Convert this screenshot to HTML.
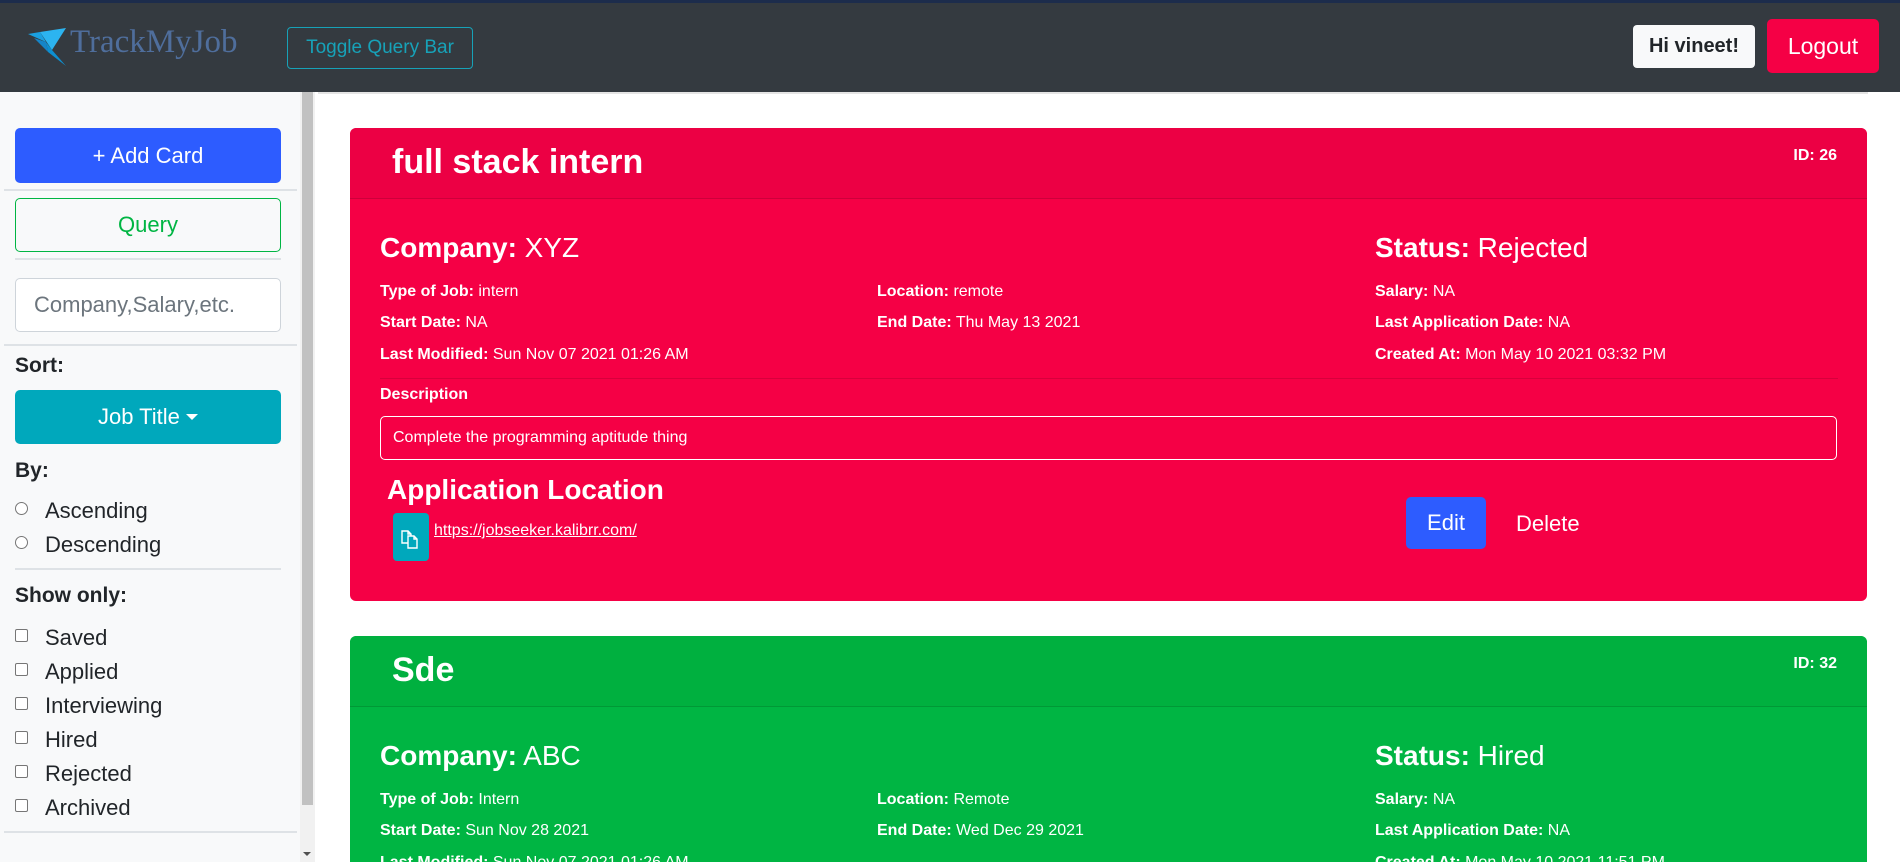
<!DOCTYPE html>
<html style="overflow:hidden;width:1900px;height:862px"><head><meta charset="utf-8"><style>
*{box-sizing:border-box;margin:0;padding:0}
body{width:1900px;height:862px;overflow:hidden;background:#fff;font-family:"Liberation Sans",sans-serif;position:relative}
.a{position:absolute}
.nav{left:0;top:0;width:1900px;height:92px;background:#343a40;border-top:3px solid #1c2c4c}
.logo{left:70px;top:24px;font-family:"Liberation Serif",serif;font-size:33px;color:#4f6e9c}
.tog{left:287px;top:27px;width:186px;height:42px;border:1px solid #17a2b8;border-radius:4px;color:#17a2b8;font-size:19px;text-align:center;line-height:40px}
.hi{left:1633px;top:25px;width:122px;height:43px;background:#f8f9fa;border-radius:4px;font-weight:bold;font-size:20px;text-align:center;line-height:43px;color:#212529}
.lo{left:1767px;top:19px;width:112px;height:54px;background:#f50045;border-radius:5px;color:#fff;font-size:23px;text-align:center;line-height:54px}
.side{left:0;top:92px;width:300px;height:770px;background:#f8f9fa}
.sb{left:300px;top:92px;width:15px;height:770px;background:#f1f1f1}
.sbt{left:302px;top:92px;width:11px;height:713px;background:#c1c1c1}
.btn{left:15px;width:266px;border-radius:5px;text-align:center;font-size:22px}
.hr{height:2px;background:#dee2e6}
.lab{left:15px;font-weight:bold;font-size:21px;color:#212529}
.opt{left:45px;font-size:22px;color:#212529}
.rad{left:15px;width:13px;height:13px;border:1px solid #767676;border-radius:50%;background:#fff}
.chk{left:15px;width:13px;height:13px;border:1px solid #767676;border-radius:2px;background:#fff}
.card{left:350px;width:1517px;border-radius:6px;color:#fff;overflow:hidden}
.hd{left:0;top:0;width:100%;height:71px;border-bottom:1px solid rgba(0,0,0,.13);border-radius:6px 6px 0 0}
.t{font-size:34px;font-weight:bold;left:42px;top:15px}
.id{font-size:16px;font-weight:bold;right:30px;top:19px}
.big{font-size:28px}
.big b{font-weight:bold}
.sm{font-size:16px}
.sm b{font-weight:bold}
</style></head><body>
<div class="a nav"></div>
<svg class="a" style="left:26px;top:28px" width="44" height="38" viewBox="0 0 44 38"><polygon points="2,6 14,4 20,14" fill="#1aa0e0"/><polygon points="14,4 40,0 26,22" fill="#2cb4f0"/><polygon points="20,14 26,22 40,38 22,24" fill="#0d8fd0"/><polygon points="8,10 20,14 22,24" fill="#1585c8"/></svg>
<div class="a logo">TrackMyJob</div>
<div class="a tog">Toggle Query Bar</div>
<div class="a hi">Hi vineet!</div>
<div class="a lo">Logout</div>

<div class="a side"></div>
<div class="a sb"></div><div class="a sbt"></div>
<div class="a" style="left:303px;top:852px;width:0;height:0;border-left:4px solid transparent;border-right:4px solid transparent;border-top:4px solid #505050"></div>
<div class="a btn" style="top:128px;height:55px;background:#2d5cff;color:#fff;line-height:55px">+ Add Card</div>
<div class="a hr" style="left:4px;top:189px;width:293px"></div>
<div class="a btn" style="top:198px;height:54px;border:1px solid #00b543;color:#00b543;line-height:52px;background:#f8f9fa">Query</div>
<div class="a hr" style="left:15px;top:258px;width:266px"></div>
<div class="a btn" style="top:278px;height:54px;border:1px solid #ced4da;background:#fff;color:#6c757d;text-align:left;padding-left:18px;line-height:52px">Company,Salary,etc.</div>
<div class="a hr" style="left:4px;top:344px;width:293px"></div>
<div class="a lab" style="top:354px">Sort:</div>
<div class="a btn" style="top:390px;height:54px;background:#00a8bc;color:#fff;line-height:54px">Job Title <span style="display:inline-block;width:0;height:0;border-left:6px solid transparent;border-right:6px solid transparent;border-top:6px solid #fff;vertical-align:4px"></span></div>
<div class="a lab" style="top:459px">By:</div>
<div class="a rad" style="top:502px"></div><div class="a opt" style="top:498px">Ascending</div>
<div class="a rad" style="top:536px"></div><div class="a opt" style="top:532px">Descending</div>
<div class="a hr" style="left:15px;top:568px;width:266px"></div>
<div class="a lab" style="top:584px">Show only:</div>
<div class="a chk" style="top:629px"></div><div class="a opt" style="top:625px">Saved</div>
<div class="a chk" style="top:663px"></div><div class="a opt" style="top:659px">Applied</div>
<div class="a chk" style="top:697px"></div><div class="a opt" style="top:693px">Interviewing</div>
<div class="a chk" style="top:731px"></div><div class="a opt" style="top:727px">Hired</div>
<div class="a chk" style="top:765px"></div><div class="a opt" style="top:761px">Rejected</div>
<div class="a chk" style="top:799px"></div><div class="a opt" style="top:795px">Archived</div>
<div class="a hr" style="left:4px;top:831px;width:293px"></div>

<div class="a" style="left:318px;top:92px;width:1550px;height:2px;background:#e4e4e4"></div>

<div class="a card" style="top:128px;height:473px;background:#f50045">
 <div class="a hd" style="background:#ec0044"></div>
 <div class="a t">full stack intern</div>
 <div class="a id">ID: 26</div>
 <div class="a big" style="left:30px;top:104px"><b>Company:</b> XYZ</div>
 <div class="a big" style="left:1025px;top:104px"><b>Status:</b> Rejected</div>
 <div class="a sm" style="left:30px;top:155px"><b>Type of Job:</b> intern</div>
 <div class="a sm" style="left:527px;top:155px"><b>Location:</b> remote</div>
 <div class="a sm" style="left:1025px;top:155px"><b>Salary:</b> NA</div>
 <div class="a sm" style="left:30px;top:186px"><b>Start Date:</b> NA</div>
 <div class="a sm" style="left:527px;top:186px"><b>End Date:</b> Thu May 13 2021</div>
 <div class="a sm" style="left:1025px;top:186px"><b>Last Application Date:</b> NA</div>
 <div class="a sm" style="left:30px;top:218px"><b>Last Modified:</b> Sun Nov 07 2021 01:26 AM</div>
 <div class="a sm" style="left:1025px;top:218px"><b>Created At:</b> Mon May 10 2021 03:32 PM</div>
 <div class="a" style="left:30px;top:250px;width:1458px;height:1px;background:rgba(0,0,0,.12)"></div>
 <div class="a sm" style="left:30px;top:258px"><b>Description</b></div>
 <div class="a sm" style="left:30px;top:288px;width:1457px;height:44px;border:1px solid #fff;border-radius:5px;padding:12px 12px">Complete the programming aptitude thing</div>
 <div class="a big" style="left:37px;top:346px;font-weight:bold">Application Location</div>
 <div class="a" style="left:43px;top:385px;width:36px;height:48px;background:#00a8bc;border-radius:4px">
  <svg width="36" height="48" viewBox="0 0 36 48"><path d="M9 18h6l3 3v9h-9z M15 18v3h3" fill="none" stroke="#fff" stroke-width="1.4"/><path d="M15 23h6l3 3v9h-9z M21 23v3h3" fill="#00a8bc" stroke="#fff" stroke-width="1.4"/></svg>
 </div>
 <div class="a sm" style="left:84px;top:394px;text-decoration:underline">https://jobseeker.kalibrr.com/</div>
 <div class="a" style="left:1056px;top:369px;width:80px;height:52px;background:#2d5cff;border-radius:5px;font-size:22px;text-align:center;line-height:52px">Edit</div>
 <div class="a" style="left:1166px;top:370px;font-size:22px;line-height:52px">Delete</div>
</div>

<div class="a card" style="top:636px;height:226px;background:#00b543;border-radius:6px 6px 0 0">
 <div class="a hd" style="background:#00b03f"></div>
 <div class="a t">Sde</div>
 <div class="a id">ID: 32</div>
 <div class="a big" style="left:30px;top:104px"><b>Company:</b> ABC</div>
 <div class="a big" style="left:1025px;top:104px"><b>Status:</b> Hired</div>
 <div class="a sm" style="left:30px;top:155px"><b>Type of Job:</b> Intern</div>
 <div class="a sm" style="left:527px;top:155px"><b>Location:</b> Remote</div>
 <div class="a sm" style="left:1025px;top:155px"><b>Salary:</b> NA</div>
 <div class="a sm" style="left:30px;top:186px"><b>Start Date:</b> Sun Nov 28 2021</div>
 <div class="a sm" style="left:527px;top:186px"><b>End Date:</b> Wed Dec 29 2021</div>
 <div class="a sm" style="left:1025px;top:186px"><b>Last Application Date:</b> NA</div>
 <div class="a sm" style="left:30px;top:218px"><b>Last Modified:</b> Sun Nov 07 2021 01:26 AM</div>
 <div class="a sm" style="left:1025px;top:218px"><b>Created At:</b> Mon May 10 2021 11:51 PM</div>
</div>
</body></html>
